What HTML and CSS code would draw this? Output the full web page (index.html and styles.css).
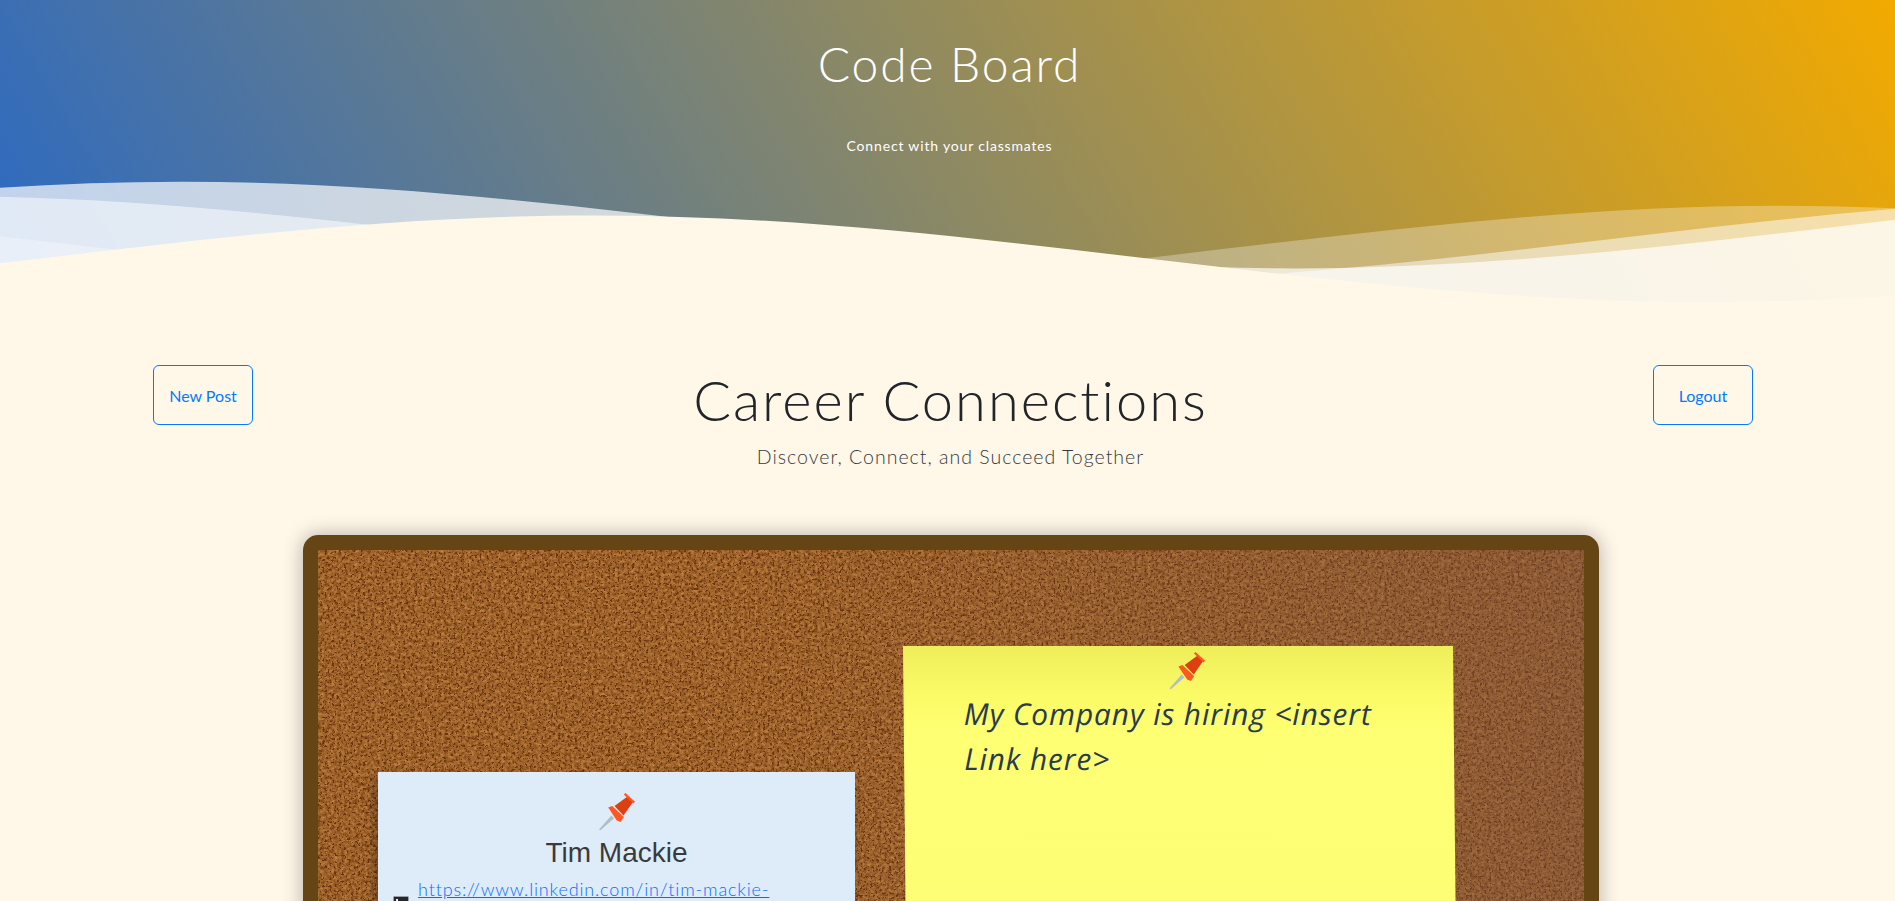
FILE: index.html
```html
<!DOCTYPE html>
<html lang="en">
<head>
<meta charset="utf-8">
<title>Code Board</title>
<link rel="stylesheet" href="styles.css">
</head>
<body>
<svg class="defs" width="0" height="0" aria-hidden="true">
  <defs>
    <path id="gentle-wave" d="M-160 44c30 0 58-18 88-18s58 18 88 18 58-18 88-18 58 18 88 18v44h-352z"/>
    <g id="pin">
      <path class="pin-needle" d="M0 36.5 12.3 22.5 15.2 25.2 1.4 37.2Z"/>
      <path class="pin-head" d="M15.5 13 28.5 3.5 34 9 24.5 22.5Z"/>
      <path class="pin-cap" d="M26.5 0 36 8.8 34.4 10.4 24.8 1.6Z"/>
      <path class="pin-cap" d="M9.2 14.4 13.2 13 24.8 24 21.6 29 17.8 27.4Z"/>
    </g>
    <filter id="cork" x="0" y="0" width="100%" height="100%" color-interpolation-filters="sRGB">
      <feTurbulence type="fractalNoise" baseFrequency="0.3" numOctaves="3" seed="11" result="n1"/>
      <feColorMatrix in="n1" type="matrix" values="0.42 0 0 0 0.41  0.36 0 0 0 0.21  0.26 0 0 0 0.04  0 0 0 0 1" result="base"/>
      <feTurbulence type="fractalNoise" baseFrequency="0.42" numOctaves="2" seed="4" result="n2"/>
      <feColorMatrix in="n2" type="matrix" values="0 0 0 0 0.42  0 0 0 0 0.2  0 0 0 0 0.05  9 0 0 0 -5.2" result="dark"/>
      <feTurbulence type="fractalNoise" baseFrequency="0.38" numOctaves="2" seed="23" result="n3"/>
      <feColorMatrix in="n3" type="matrix" values="0 0 0 0 0.74  0 0 0 0 0.49  0 0 0 0 0.28  0 5 0 0 -3.1" result="light"/>
      <feMerge result="merged">
        <feMergeNode in="base"/>
        <feMergeNode in="light"/>
        <feMergeNode in="dark"/>
      </feMerge>
      <feGaussianBlur in="merged" stdDeviation="0.45"/>
    </filter>
  </defs>
</svg>

<header class="hero">
  <div class="hero-inner">
    <h1 class="hero-title">Code Board</h1>
    <p class="hero-sub">Connect with your classmates</p>
  </div>
  <svg class="waves" viewBox="0 24 150 28" preserveAspectRatio="none" aria-hidden="true">
    <use href="#gentle-wave" x="86.4" y="0" class="wave-a"/>
    <use href="#gentle-wave" x="67.25" y="3" class="wave-b"/>
    <use href="#gentle-wave" x="36.8" y="5" class="wave-c"/>
    <use href="#gentle-wave" x="119" y="7" class="wave-d"/>
  </svg>
</header>

<main class="page">
  <section class="heading-row">
    <a class="btn" href="#">New Post</a>
    <div class="heading">
      <h2 class="heading-title">Career Connections</h2>
      <p class="heading-sub">Discover, Connect, and Succeed Together</p>
    </div>
    <a class="btn" href="#">Logout</a>
  </section>

  <section class="board">
    <svg class="cork" aria-hidden="true"><rect width="100%" height="100%" filter="url(#cork)"/></svg>
    <div class="cork-shade"></div>
    <div class="notes">
      <article class="note note-blue">
        <svg class="pin" viewBox="0 0 36 38" aria-hidden="true"><use href="#pin"/></svg>
        <h3 class="note-name">Tim Mackie</h3>
        <div class="note-link">
          <svg class="li-icon" viewBox="0 0 16 16" aria-hidden="true">
            <rect class="li-bg" x="0.5" y="0.5" width="15" height="15" rx="1"/>
            <rect class="li-mark" x="3" y="3" width="2" height="2"/>
            <rect class="li-mark" x="3" y="6" width="2" height="7"/>
            <path class="li-mark" d="M6.5 6h2v1c.5-.8 1.2-1.2 2.2-1.2 1.6 0 2.3 1 2.3 2.8V13h-2V9c0-.9-.3-1.4-1-1.4-.8 0-1.5.5-1.5 1.6V13h-2Z"/>
          </svg>
          <a class="link" href="#">https://www.linkedin.com/in/tim-mackie-</a>
        </div>
      </article>
      <article class="note note-yellow">
        <svg class="pin" viewBox="0 0 36 38" aria-hidden="true"><use href="#pin"/></svg>
        <p class="note-text">My Company is hiring &lt;insert Link here&gt;</p>
      </article>
    </div>
  </section>
</main>
</body>
</html>
```

FILE: styles.css
```css
* { box-sizing: border-box; }
html, body { margin: 0; padding: 0; height: 901px; overflow: hidden; }
body { background: #fff8e9; color: #212529; font-family: "Lato", "Liberation Sans", sans-serif; }
.defs { display: block; width: 0; height: 0; }

.hero { height: 307px; display: flex; flex-direction: column; color: #fff; background: linear-gradient(60deg, #2a69c4 0%, #f2aa00 100%); }
.hero-inner { height: 172px; display: flex; flex-direction: column; align-items: center; padding-left: 4px; }
.hero-title { margin: 36px 0 0; font-size: 48px; line-height: 56px; font-weight: 300; letter-spacing: 1.8px; }
.hero-sub { margin: 44px 0 0; font-size: 14px; line-height: 20px; font-weight: 400; letter-spacing: 0.83px; }
.waves { display: block; width: 100%; height: 135px; }
.wave-a { fill: rgba(255, 255, 255, 0.7); }
.wave-b { fill: rgba(255, 255, 255, 0.5); }
.wave-c { fill: rgba(255, 255, 255, 0.3); }
.wave-d { fill: #fff8e9; }

.page { display: flex; flex-direction: column; }
.heading-row { display: flex; justify-content: space-between; align-items: flex-start; padding: 58px 142px 0 153px; }
.btn { flex: none; width: 100px; height: 60px; display: flex; align-items: center; justify-content: center; border: 1px solid #007bff; border-radius: 6px; color: #007bff; font-size: 16px; font-weight: 400; text-decoration: none; }
.heading { display: flex; flex-direction: column; align-items: center; padding-right: 5px; }
.heading-title { margin: 0; font-size: 56px; line-height: 70px; font-weight: 300; letter-spacing: 2px; color: #212529; }
.heading-sub { margin: 9px 0 0; font-size: 19.5px; line-height: 26px; font-weight: 300; letter-spacing: 1px; color: #343a40; }

.board { position: relative; margin: 65px 0 0 303px; width: 1296px; height: 900px; flex: none; border: 15px solid #654513; border-radius: 15px; box-shadow: 0 0 20px rgba(0, 0, 0, 0.3); }
.cork { position: absolute; inset: 0; width: 100%; height: 100%; display: block; }
.cork-shade { position: absolute; inset: 0; background: linear-gradient(90deg, rgba(125, 90, 70, 0) 35%, rgba(120, 80, 65, 0.45) 100%); }
.notes { position: relative; display: flex; align-items: flex-start; gap: 48px; padding: 96px 0 0 60px; }

.note { flex: none; display: flex; flex-direction: column; }
.pin { display: block; width: 36px; height: 38px; }
.pin-needle { fill: #b0bec5; }
.pin-head { fill: #dd3f10; }
.pin-cap { fill: #ff5722; }

.note-blue { width: 477px; height: 500px; margin-top: 126px; padding-top: 21px; align-items: center; background: #deecf9; box-shadow: -3px 6px 10px rgba(0, 0, 0, 0.35); }
.note-name { margin: 2px 0 0; font-family: "Liberation Sans", Arial, sans-serif; font-size: 28px; line-height: 40px; font-weight: 400; color: #3a3a3a; }
.note-link { align-self: stretch; display: flex; align-items: flex-start; gap: 9px; padding: 2px 40px 0 15px; }
.li-icon { flex: none; width: 16px; height: 16px; margin-top: 21px; }
.li-bg { fill: #23272b; stroke: #9aa0a6; stroke-width: 1; }
.li-mark { fill: #f2f2f2; }
.link { font-size: 18px; line-height: 28px; font-weight: 300; letter-spacing: 0.85px; color: #0a6cff; }

.note-yellow { width: 550px; height: 420px; padding: 6px 60px 0 60px; transform: skewX(0.56deg); transform-origin: top left; background: linear-gradient(180deg, #eeee5a 0, #fbfb68 50px, #ffff74 90px, #fdfd78 100%); }
.note-yellow .pin { align-self: center; margin-left: 17px; }
.note-text { margin: 1px 0 0; font-family: "Open Sans", "Liberation Sans", sans-serif; font-style: italic; font-size: 30px; line-height: 45px; letter-spacing: 0.8px; color: #2a3b4d; }
```
